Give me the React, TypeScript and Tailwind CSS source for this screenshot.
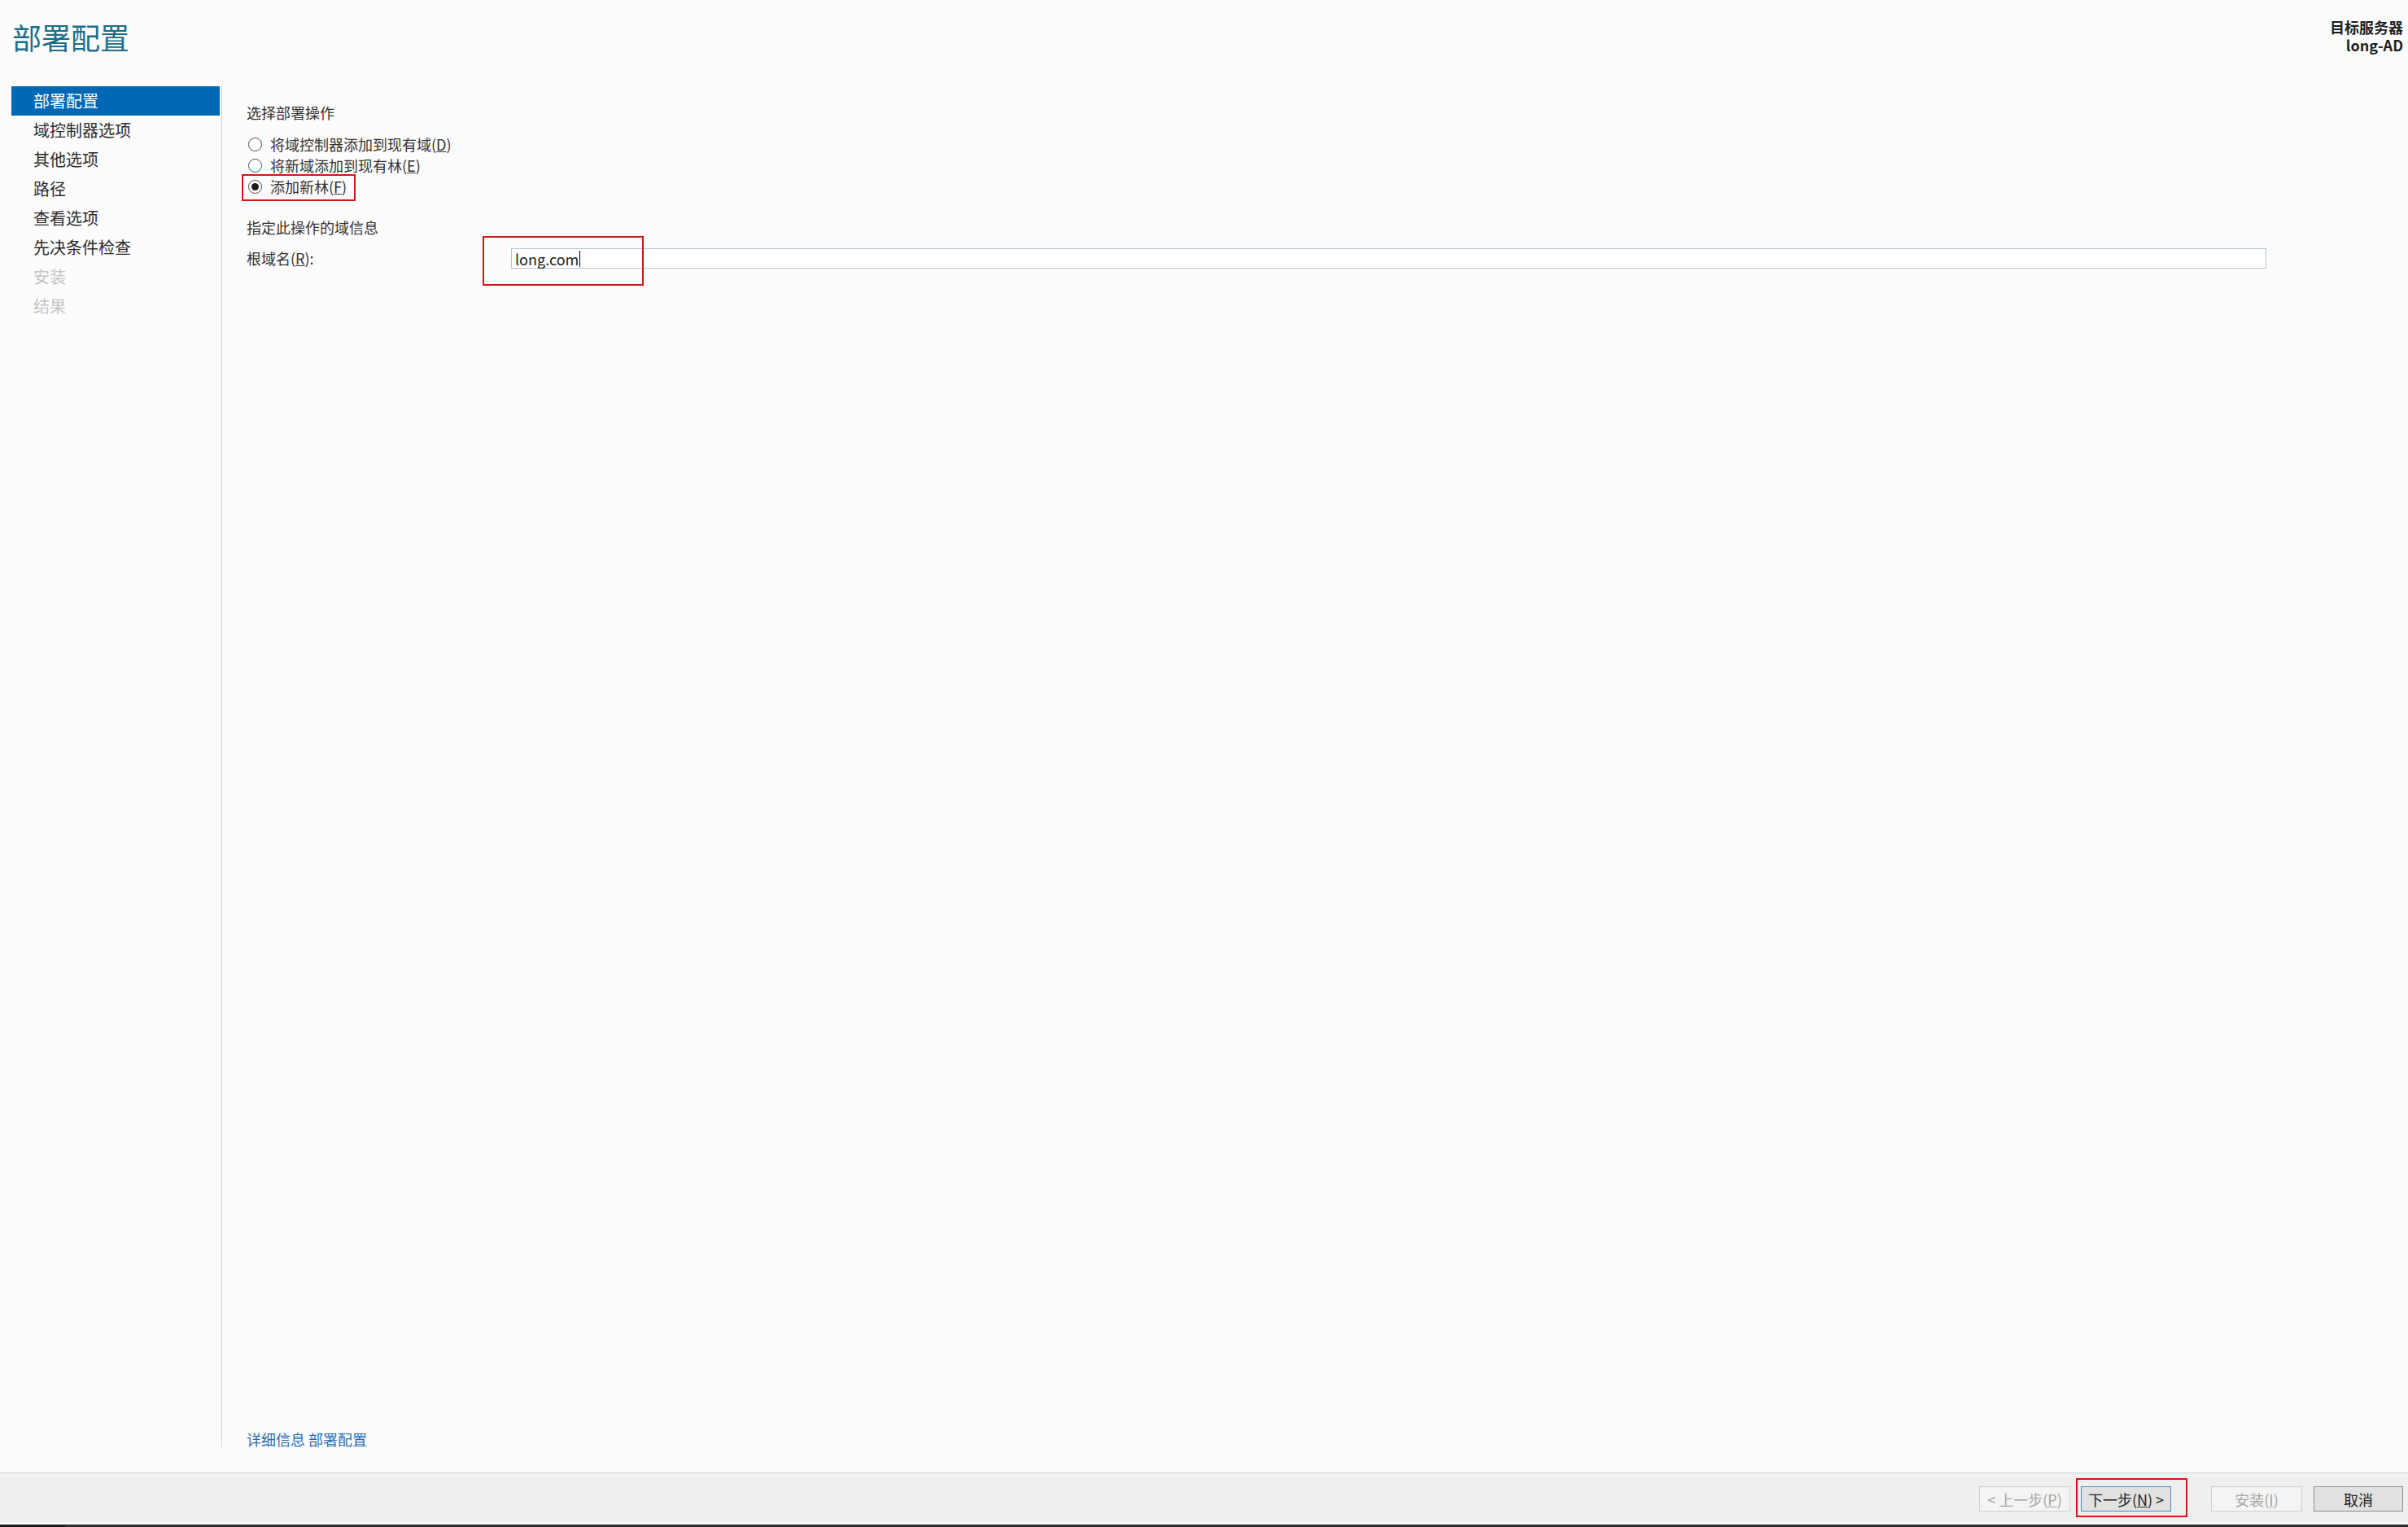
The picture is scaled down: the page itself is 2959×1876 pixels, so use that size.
const navItems = [
  { label: '部署配置', state: 'active' },
  { label: '域控制器选项', state: 'normal' },
  { label: '其他选项', state: 'normal' },
  { label: '路径', state: 'normal' },
  { label: '查看选项', state: 'normal' },
  { label: '先决条件检查', state: 'normal' },
  { label: '安装', state: 'disabled' },
  { label: '结果', state: 'disabled' },
]

function Radio({ checked, children }: { checked?: boolean; children: React.ReactNode }) {
  return (
    <div className="flex h-[26px] items-center">
      <span className="ml-[2px] flex h-[17px] w-[17px] items-center justify-center rounded-full border border-[#4a4a4a] bg-white">
        {checked ? <span className="h-[9px] w-[9px] rounded-full bg-[#1e1e1e]" /> : null}
      </span>
      <span className="ml-[10px] text-[18px] leading-[26px] text-[#333]">{children}</span>
    </div>
  )
}

function WizardButton({
  children,
  disabled,
  focused,
  className = '',
}: {
  children: React.ReactNode
  disabled?: boolean
  focused?: boolean
  className?: string
}) {
  const look = disabled
    ? 'border-[#cfcfcf] bg-[#f4f4f4] text-[#a6a6a6]'
    : focused
      ? 'border-[#3d8fd8] bg-[#e1e1e1] text-[#222]'
      : 'border-[#8f8f8f] bg-[#e1e1e1] text-[#222]'
  return (
    <div
      className={`relative flex h-[31px] shrink-0 items-center justify-center border text-[18px] leading-none ${look} ${className}`}
    >
      {children}
    </div>
  )
}

export default function App() {
  return (
    <div className="flex h-[1876px] w-[2959px] flex-col bg-[#fcfcfc] font-['Noto_Sans_CJK_SC','Noto_Sans',sans-serif] text-[#333]">
      <header className="flex h-[106px] shrink-0 justify-between">
        <h1 className="pl-[15px] pt-[23px] text-[36px] leading-[44px] font-normal text-[#1b6e8a]">部署配置</h1>
        <div className="pr-[6px] pt-[22px] text-right text-[18px] leading-[22px] font-bold text-[#1e1e1e]">
          <div>目标服务器</div>
          <div>long-AD</div>
        </div>
      </header>

      <div className="flex min-h-0 flex-1">
        <nav className="pb-[31px] pl-[14px]">
          <div className="flex h-full w-[259px] flex-col border-r border-[#d0d0d0]">
            {navItems.map((item) => (
              <div
                key={item.label}
                className={`flex h-[36px] w-[256px] items-center pl-[27px] text-[20px] ${
                  item.state === 'active'
                    ? 'bg-[#0067b4] text-white'
                    : item.state === 'disabled'
                      ? 'text-[#c4c4c4]'
                      : 'text-[#2b2b2b]'
                }`}
              >
                {item.label}
              </div>
            ))}
          </div>
        </nav>

        <main className="flex min-w-0 flex-1 flex-col pb-[29px] pl-[30px] pt-[20px]">
          <div className="text-[18px] leading-[24px]">选择部署操作</div>
          <div className="mt-[14px] flex flex-col">
            <Radio>
              将域控制器添加到现有域(<span className="underline">D</span>)
            </Radio>
            <Radio>
              将新域添加到现有林(<span className="underline">E</span>)
            </Radio>
            <div className="relative">
              <Radio checked>
                添加新林(<span className="underline">F</span>)
              </Radio>
              <div className="absolute left-[-6px] top-[-2px] h-[33px] w-[140px] border-2 border-[#d4141b]" />
            </div>
          </div>

          <div className="mt-[25px] text-[18px] leading-[24px]">指定此操作的域信息</div>
          <div className="mt-[14px] flex h-[25px] items-center">
            <div className="w-[325px] text-[18px]">
              根域名(<span className="underline">R</span>):
            </div>
            <div className="relative flex h-[25px] w-[2157px] items-center border border-[#b3c4d4] bg-white px-[4px]">
              <span className="text-[18px] leading-none text-[#222]">long.com</span>
              <span className="ml-[1px] h-[20px] w-[1px] bg-black" />
              <div className="absolute left-[-36px] top-[-16px] h-[61px] w-[198px] border-2 border-[#d4141b]" />
            </div>
          </div>

          <div className="mt-auto text-[18px] leading-[24px] text-[#1f6fb4]">详细信息 部署配置</div>
        </main>
      </div>

      <footer className="flex h-[61px] shrink-0 flex-col border-t border-[#d4d4d4] bg-[#efefef]">
        <div className="h-[3px] border-b border-[#f7f7f7]" />
        <div className="flex flex-1 items-start justify-end pr-[6px] pt-[13px]">
          <WizardButton disabled className="w-[112px]">
            &lt; 上一步(<span className="underline">P</span>)
          </WizardButton>
          <WizardButton focused className="ml-[13px] w-[111px]">
            下一步(<span className="underline">N</span>) &gt;
            <div className="absolute bottom-[-8px] left-[-7px] right-[-21px] top-[-11px] border-2 border-[#d4141b]" />
          </WizardButton>
          <WizardButton disabled className="ml-[49px] w-[112px]">
            安装(<span className="underline">I</span>)
          </WizardButton>
          <WizardButton className="ml-[14px] w-[110px]">取消</WizardButton>
        </div>
      </footer>
      <div className="h-[3px] shrink-0 bg-[#f7f7f7]" />
      <div className="flex h-[3px] shrink-0">
        <div className="w-[80px] bg-[#1c1c1c]" />
        <div className="flex-1 bg-[#2b2b2b]" />
      </div>
    </div>
  )
}
